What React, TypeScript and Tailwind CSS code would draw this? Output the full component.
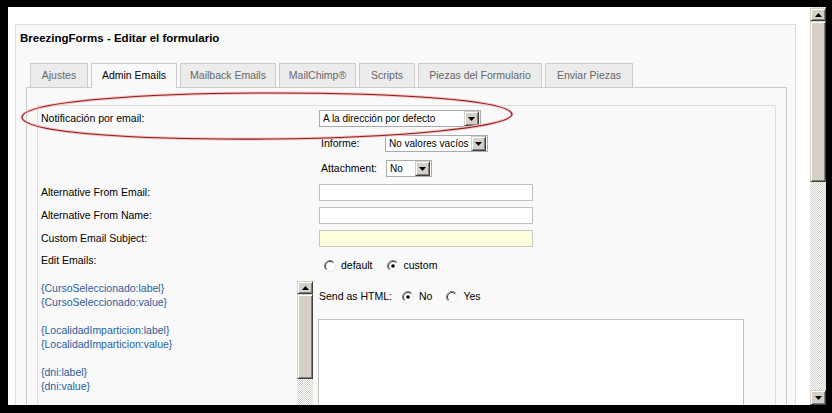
import React from 'react';

const TABS = [
  { label: 'Ajustes', w: 'w-[58px]' },
  { label: 'Admin Emails', w: 'w-[86px]', active: true },
  { label: 'Mailback Emails', w: 'w-[96px]' },
  { label: 'MailChimp®', w: 'w-[77px]' },
  { label: 'Scripts', w: 'w-[56px]' },
  { label: 'Piezas del Formulario', w: 'w-[124px]' },
  { label: 'Enviar Piezas', w: 'w-[88px]' },
];

const PLACEHOLDERS = [
  '{CursoSeleccionado:label}',
  '{CursoSeleccionado:value}',
  '',
  '{LocalidadImparticion:label}',
  '{LocalidadImparticion:value}',
  '',
  '{dni:label}',
  '{dni:value}',
  '',
];

// classic windows 3d button with a small arrow
function Arrow({ dir, className }: { dir: 'up' | 'down'; className: string }) {
  return (
    <div
      className={`flex items-center justify-center bg-[#d4d0c8] border border-[#d4d0c8] border-r-[#404040] border-b-[#404040] shadow-[inset_1px_1px_0_#ffffff,inset_-1px_-1px_0_#808080] ${className}`}
    >
      <svg width="7" height="4" viewBox="0 0 7 4">
        {dir === 'up' ? <path d="M3.5 0 L7 4 L0 4 Z" fill="#000" /> : <path d="M0 0 L7 0 L3.5 4 Z" fill="#000" />}
      </svg>
    </div>
  );
}

function Thumb({ className }: { className: string }) {
  return (
    <div
      className={`bg-[#d4d0c8] border border-[#d4d0c8] border-r-[#404040] border-b-[#404040] shadow-[inset_1px_1px_0_#ffffff,inset_-1px_-1px_0_#808080] ${className}`}
    />
  );
}

function Select({ value, className }: { value: string; className: string }) {
  return (
    <div className={`flex items-center h-[17px] border border-[#a5acb2] bg-white pl-[3px] pr-px ${className}`}>
      <span className="flex-1 overflow-hidden text-black whitespace-nowrap text-[10px]">{value}</span>
      <Arrow dir="down" className="shrink-0 ml-[2px] w-[15px] h-[15px]" />
    </div>
  );
}

function Radio({ checked }: { checked?: boolean }) {
  return (
    <svg width="12" height="12" viewBox="0 0 12 12" className="shrink-0">
      <circle cx="6" cy="6" r="5.5" fill="#fff" />
      <path d="M2.1 9.9 A5.5 5.5 0 0 1 9.9 2.1" stroke="#808080" fill="none" />
      <path d="M9.9 2.1 A5.5 5.5 0 0 1 2.1 9.9" stroke="#e8e8e8" fill="none" />
      <path d="M2.8 9.2 A4.5 4.5 0 0 1 9.2 2.8" stroke="#404040" fill="none" />
      {checked && <circle cx="6" cy="6" r="1.8" fill="#000" />}
    </svg>
  );
}

export default function App() {
  return (
    <div className="relative w-[832px] h-[413px] bg-black flex pt-[7px] pl-[8px] pr-[6px] pb-[8px] font-['Liberation_Sans',Arial,sans-serif] text-[10.5px] text-black">
      {/* Page */}
      <div className="flex-1 h-full bg-white overflow-hidden pl-[7px] pt-[17px] pr-[14px]">
        <div className="border border-[#dddddd] bg-[#f9f9f9] pt-[6px] pl-[4px] pr-[8px] h-[420px]">
          <div className="h-[14px] leading-[14px] text-[11.5px] font-bold">BreezingForms - Editar el formulario</div>

          <div className="ml-[6px] mt-[18px]">
            {/* Tabs */}
            <div className="flex items-end gap-[3px] pl-[4px] h-[24px]">
              {TABS.map((t) =>
                t.active ? (
                  <div
                    key={t.label}
                    className={`relative z-10 -mb-px h-[25px] flex items-center justify-center pb-px border border-b-0 border-[#cccccc] bg-[#f9f9f9] text-black ${t.w}`}
                  >
                    {t.label}
                  </div>
                ) : (
                  <div
                    key={t.label}
                    className={`h-[24px] flex items-center justify-center border border-b-0 border-[#cccccc] bg-[#ececec] text-[#666666] ${t.w}`}
                  >
                    {t.label}
                  </div>
                )
              )}
            </div>

            {/* Tab panel */}
            <div className="border border-[#cccccc] bg-[#f9f9f9] pt-[17px] px-[10px] h-[360px]">
              <div className="border border-[#dddddd] h-[340px] pt-[4px] pl-[3px]">
                <div className="flex items-center">
                  <div className="w-[278px]">Notificación por email:</div>
                  <Select value="A la dirección por defecto" className="w-[162px]" />
                </div>

                <div className="flex items-center mt-[8px]">
                  <div className="w-[278px]" />
                  <div className="w-[66px] pl-[2px]">Informe:</div>
                  <Select value="No valores vacíos" className="w-[103px]" />
                </div>

                <div className="flex items-center mt-[8px]">
                  <div className="w-[278px]" />
                  <div className="w-[67px] pl-[2px]">Attachment:</div>
                  <Select value="No" className="w-[46px]" />
                </div>

                <div className="flex items-center mt-[7px]">
                  <div className="w-[278px]">Alternative From Email:</div>
                  <div className="w-[214px] h-[17px] border border-[#c0c0c0] bg-white" />
                </div>

                <div className="flex items-center mt-[6px]">
                  <div className="w-[278px]">Alternative From Name:</div>
                  <div className="w-[214px] h-[17px] border border-[#c0c0c0] bg-white" />
                </div>

                <div className="flex items-center mt-[6px]">
                  <div className="w-[278px]">Custom Email Subject:</div>
                  <div className="w-[214px] h-[17px] border border-[#c8c8c0] bg-[#ffffdd]" />
                </div>

                <div className="flex items-start mt-[8px] h-[16px]">
                  <div className="w-[278px] leading-[12px] -mt-px">Edit Emails:</div>
                  <div className="flex items-center gap-[5px] pl-[5px] pt-[3px]">
                    <Radio />
                    <span>default</span>
                    <span className="w-[4px]" />
                    <Radio checked />
                    <span>custom</span>
                  </div>
                </div>

                {/* Placeholders + message */}
                <div className="flex mt-[8px] h-[140px]">
                  <div className="flex w-[275px] -ml-[3px]">
                    <div className="flex-1 pl-[3px] pt-[2px] text-[#26609c] leading-[14px]">
                      {PLACEHOLDERS.map((p, i) => (
                        <div key={i} className="h-[14px] whitespace-nowrap">
                          {p}
                        </div>
                      ))}
                    </div>
                    <div className="w-[16px] mt-[2px] flex flex-col bg-[repeating-conic-gradient(#d4d0c8_0%_25%,#ffffff_0%_50%)] bg-[length:2px_2px]">
                      <Arrow dir="up" className="h-[13px]" />
                      <Thumb className="h-[85px]" />
                    </div>
                  </div>

                  <div className="ml-[5px] flex flex-col">
                    <div className="flex items-center gap-[5px] h-[14px] mt-[11px] pl-px">
                      <span className="mr-[5px]">Send as HTML:</span>
                      <Radio checked />
                      <span>No</span>
                      <span className="w-[4px]" />
                      <Radio />
                      <span>Yes</span>
                    </div>
                    <div className="mt-[15px] w-[426px] h-[120px] border border-[#c0c0c0] bg-white" />
                  </div>
                </div>
              </div>
            </div>
          </div>
        </div>
      </div>

      {/* Window scrollbar */}
      <div className="w-[16px] h-full flex flex-col bg-[repeating-conic-gradient(#d4d0c8_0%_25%,#ffffff_0%_50%)] bg-[length:2px_2px]">
        <Arrow dir="up" className="mt-px h-[13px]" />
        <Thumb className="h-[161px]" />
        <div className="flex-1" />
        <Arrow dir="down" className="h-[15px]" />
      </div>

      {/* Hand-drawn highlight */}
      <svg className="absolute left-0 top-0 pointer-events-none" width="832" height="413" viewBox="0 0 832 413">
        <path
          d="M22 117 C24 101 150 93 270 93 C400 93 508 100 512 114 C512 127 400 138 270 139 C150 140 22 134 22 117 Z"
          fill="none"
          stroke="#f4c4c4"
          strokeWidth="3"
        />
        <path
          d="M22 117 C24 101 150 93 270 93 C400 93 508 100 512 114 C512 127 400 138 270 139 C150 140 22 134 22 117 Z"
          fill="none"
          stroke="#8e1c1c"
          strokeWidth="1.1"
        />
      </svg>
    </div>
  );
}
